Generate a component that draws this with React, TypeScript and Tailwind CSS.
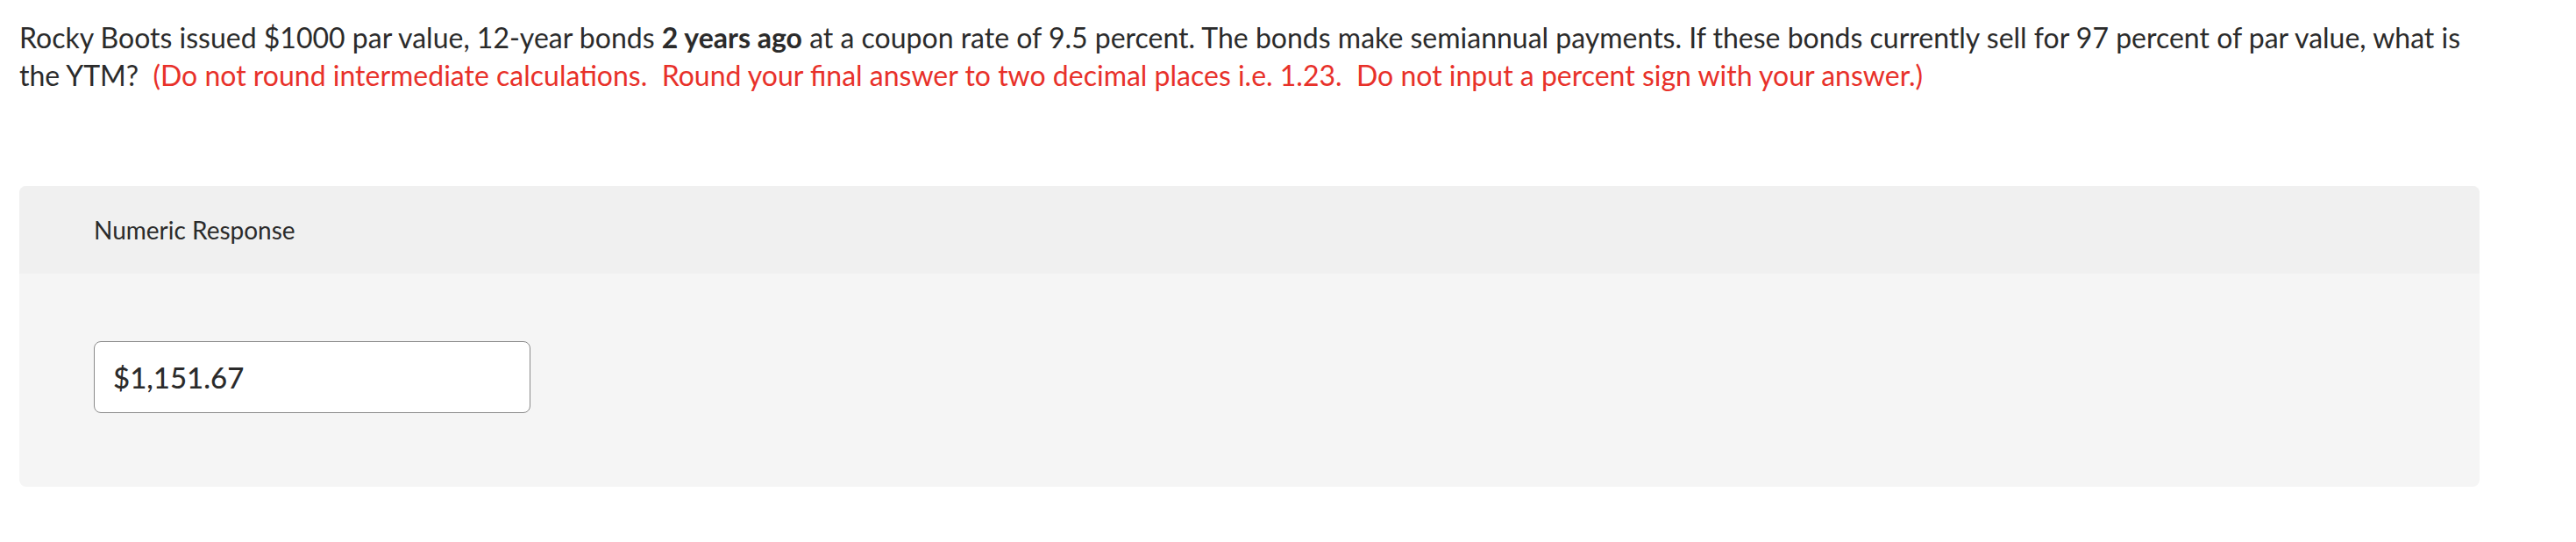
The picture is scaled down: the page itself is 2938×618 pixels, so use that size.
export default function App() {
  return (
    <div className="min-h-screen bg-white font-['Lato','Liberation_Sans',sans-serif] text-[#2b2b2b]">
      <div className="w-[2830px] pl-[22px] pt-[21px]">
        <p className="text-[32px] leading-[43px]">
          Rocky Boots issued $1000 par value, 12-year bonds <strong className="font-bold">2 years ago</strong> at a coupon rate of 9.5 percent. The bonds make semiannual payments. If these bonds currently sell for 97 percent of par value, what is the YTM?{"\u00a0 "}
          <span className="text-[#e8312a]">
            (Do not round intermediate calculations.{"\u00a0 "}Round your final answer to two decimal places i.e. 1.23.{"\u00a0 "}Do not input a percent sign with your answer.)
          </span>
        </p>
      </div>

      {/* Response card */}
      <div className="ml-[22px] mt-[105px] w-[2806px] overflow-hidden rounded-lg bg-[#f5f5f5]">
        <div className="flex h-[100px] items-center bg-[#f0f0f0] px-[85px]">
          <span className="text-[28px]">Numeric Response</span>
        </div>
        <div className="px-[85px] pt-[77px] pb-[84px]">
          <input
            type="text"
            readOnly
            value="$1,151.67"
            className="block h-[82px] w-[498px] rounded-lg border-[1.5px] border-[#8a8a8a] bg-white px-[21px] text-[33px] font-medium text-[#2b2b2b] outline-none"
          />
        </div>
      </div>
    </div>
  );
}
